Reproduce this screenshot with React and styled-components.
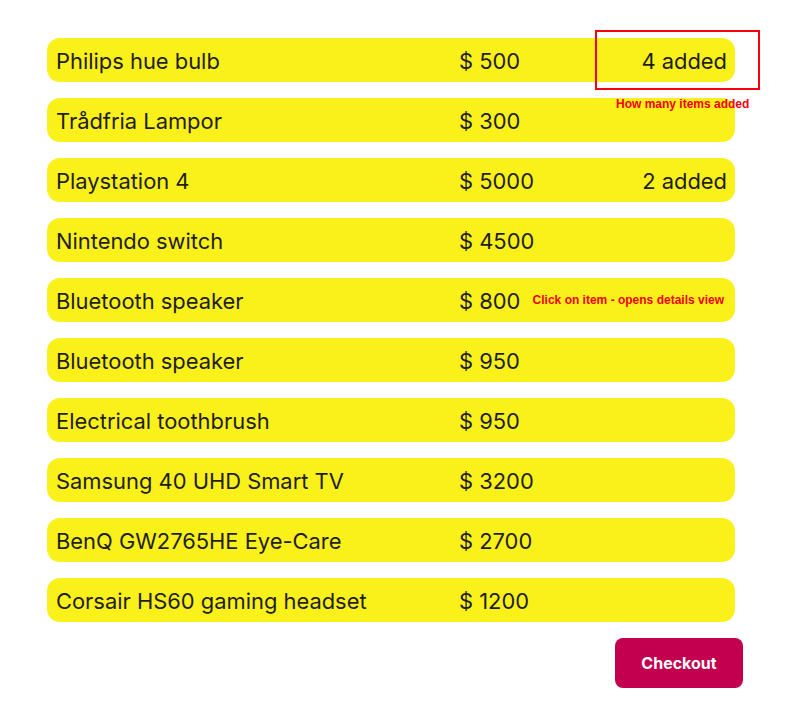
import React from 'react';
import styled, { createGlobalStyle } from 'styled-components';

const GlobalStyle = createGlobalStyle`
  body {
    margin: 0;
    background: #fff;
    font-family: Inter, "Noto Sans", sans-serif;
  }
`;

const StyledPage = styled.main`
  position: relative;
  width: 804px;
  height: 726px;
  box-sizing: border-box;
  padding: 38px 0 0 47px;
`;

const StyledList = styled.ul`
  list-style: none;
  margin: 0;
  padding: 0;
  width: 688px;
  display: flex;
  flex-direction: column;
  gap: 16px;
`;

const StyledRow = styled.li`
  position: relative;
  height: 44px;
  box-sizing: border-box;
  padding: 2px 8px 0 9px;
  display: grid;
  grid-template-columns: 403px 1fr auto;
  align-items: center;
  background: #fbf11a;
  border-radius: 13px;
  color: #1e1e1e;
  font-size: 21.9px;
  cursor: pointer;
`;

const StyledCount = styled.span`
  text-align: right;
`;

const StyledNote = styled.span`
  position: absolute;
  color: #f5000c;
  font-family: "Liberation Sans", Arial, sans-serif;
  font-weight: bold;
  font-size: 12px;
  white-space: nowrap;
`;

const StyledInlineNote = styled(StyledNote)`
  right: 11px;
  top: 50%;
  transform: translateY(-50%);
`;

const StyledHighlight = styled.div`
  position: absolute;
  left: 595px;
  top: 30px;
  width: 165px;
  height: 60px;
  box-sizing: border-box;
  border: 2.5px solid #f5000c;
`;

const StyledHighlightNote = styled(StyledNote)`
  left: 616px;
  top: 97px;
`;

const StyledFooter = styled.div`
  width: 696px;
  display: flex;
  justify-content: flex-end;
  margin-top: 16px;
`;

const StyledButton = styled.button`
  width: 128px;
  height: 50px;
  border: none;
  border-radius: 8px;
  background: #c2004f;
  color: #fff;
  font-family: Inter, "Noto Sans", sans-serif;
  font-weight: 700;
  font-size: 16px;
  cursor: pointer;
`;

const items = [
  { name: 'Philips hue bulb', price: 500, added: 4 },
  { name: 'Trådfria Lampor', price: 300 },
  { name: 'Playstation 4', price: 5000, added: 2 },
  { name: 'Nintendo switch', price: 4500 },
  { name: 'Bluetooth speaker', price: 800, note: 'Click on item - opens details view' },
  { name: 'Bluetooth speaker', price: 950 },
  { name: 'Electrical toothbrush', price: 950 },
  { name: 'Samsung 40 UHD Smart TV', price: 3200 },
  { name: 'BenQ GW2765HE Eye-Care', price: 2700 },
  { name: 'Corsair HS60 gaming headset', price: 1200 },
];

const App = () => {
  return (
    <StyledPage>
      <GlobalStyle />
      <StyledList>
        {items.map((item, i) => (
          <StyledRow key={i}>
            <span>{item.name}</span>
            <span>$ {item.price}</span>
            <StyledCount>{item.added ? `${item.added} added` : ''}</StyledCount>
            {item.note && <StyledInlineNote>{item.note}</StyledInlineNote>}
          </StyledRow>
        ))}
      </StyledList>
      <StyledFooter>
        <StyledButton>Checkout</StyledButton>
      </StyledFooter>
      <StyledHighlight />
      <StyledHighlightNote>How many items added</StyledHighlightNote>
    </StyledPage>
  );
};

export default App;
